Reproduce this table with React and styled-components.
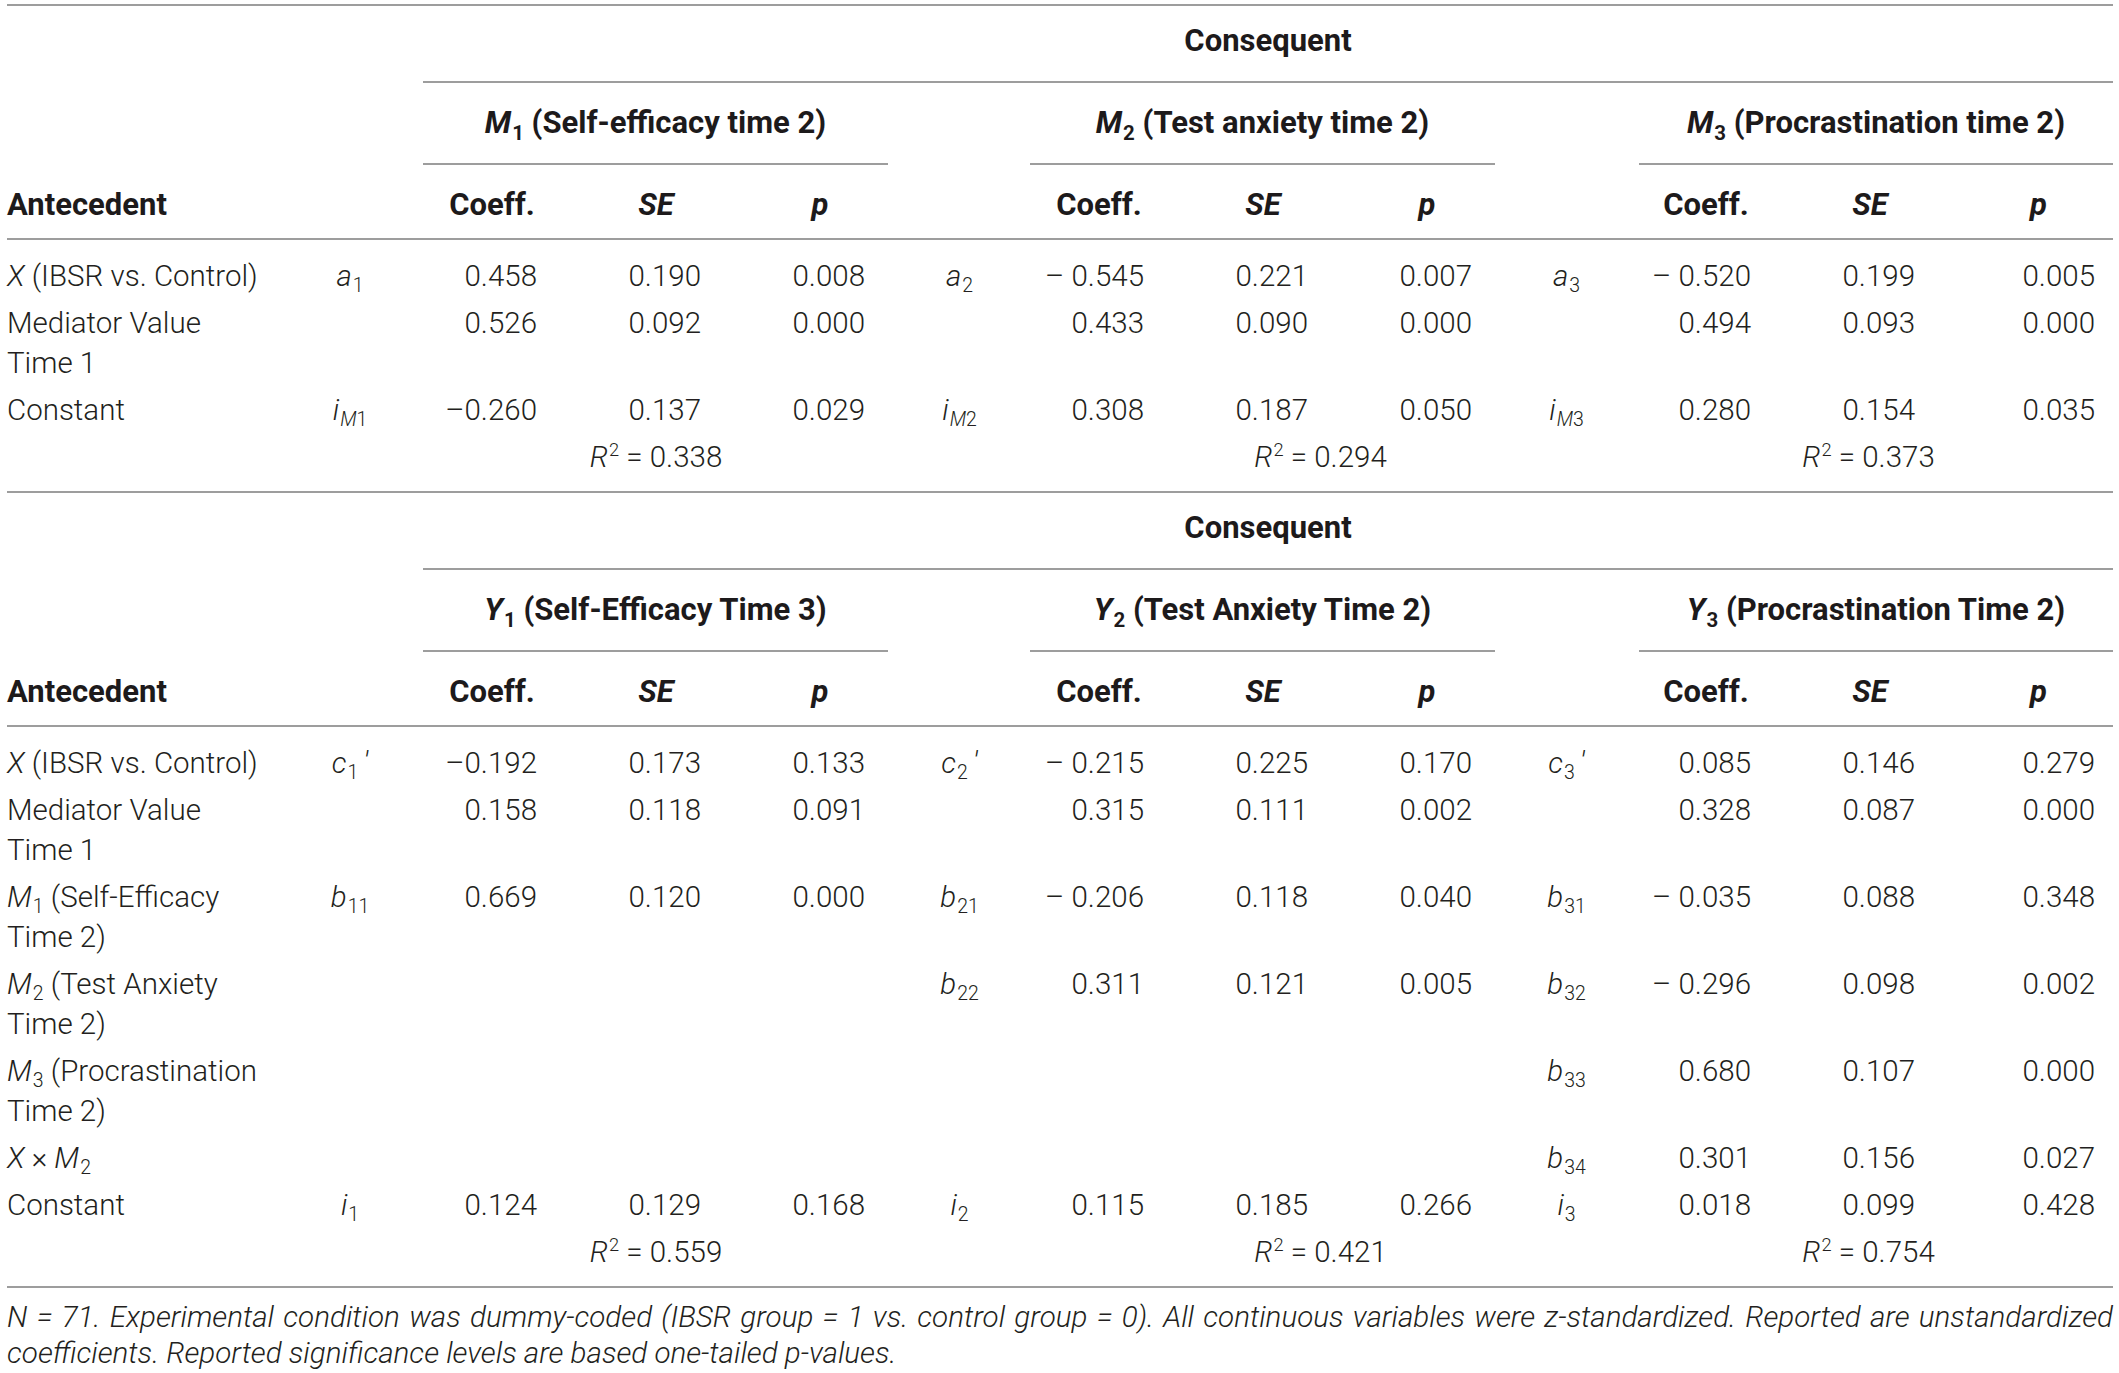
import React from "react";
import styled, { createGlobalStyle } from "styled-components";

const GlobalStyle = createGlobalStyle`
  html, body {
    margin: 0;
    padding: 0;
    background: #ffffff;
  }
  body {
    font-family: Roboto, "Liberation Sans", Arial, sans-serif;
    font-weight: 300;
    color: #231f20;
  }
`;

const COLS =
  "283px 120px 164px 164px 164px 115px 164px 164px 164px 115px 164px 164px 161px";
const RULE = "2px solid #9d9d9d";

const Page = styled.div`
  padding: 4px 6px 0 7px;
  width: 2106px;
`;

const Table = styled.div`
  border-top: ${RULE};
  border-bottom: ${RULE};
`;

const Block = styled.section`
  & + & {
    border-top: ${RULE};
  }
`;

const GridRow = styled.div`
  display: grid;
  grid-template-columns: ${COLS};
  font-size: 29.5px;
  line-height: 40px;
`;

const SpanHead = styled.div`
  grid-column: ${(p) => p.$col};
  margin-left: ${(p) => p.$ml ?? 13}px;
  margin-right: ${(p) => p.$mr ?? 0}px;
  padding: ${(p) => p.$pad};
  border-bottom: ${RULE};
  text-align: center;
  font-weight: 700;
  font-size: 31px;
  color: #1d1a1b;
  white-space: nowrap;
`;

const ColHeadRow = styled(GridRow)`
  padding: 20px 0 13px;
  border-bottom: ${RULE};
  font-weight: 700;
  font-size: 31px;
  color: #1d1a1b;
`;

const ColHead = styled.div`
  grid-column: ${(p) => p.$col};
  text-align: ${(p) => p.$align || "center"};
  padding-left: ${(p) => p.$pl || 0}px;
  font-style: ${(p) => (p.$italic ? "italic" : "normal")};
`;

const Body = styled.div`
  padding: 13px 0 10px;
`;

const BodyRow = styled(GridRow)`
  & > * {
    padding: 3px 0 4px;
  }
`;

const Antecedent = styled.div`
  grid-column: 1;
  text-align: left;
  white-space: nowrap;
`;

const PathLabel = styled.div`
  grid-column: ${(p) => p.$col};
  text-align: center;
  font-style: italic;
  white-space: nowrap;
`;

const Value = styled.div`
  grid-column: ${(p) => p.$col};
  text-align: right;
  padding-right: ${(p) => p.$pr ?? 37}px !important;
  white-space: nowrap;
`;

const RSquared = styled.div`
  grid-column: ${(p) => p.$col};
  text-align: center;
  white-space: nowrap;
`;

const I = styled.i`
  font-style: italic;
`;

const Up = styled.span`
  font-style: normal;
`;

const Sub = styled.sub`
  font-size: 0.66em;
  line-height: 0;
  vertical-align: baseline;
  position: relative;
  top: 0.32em;
  font-style: normal;
  margin-left: 1px;
`;

const Sup = styled.sup`
  font-size: 0.62em;
  line-height: 0;
  vertical-align: baseline;
  position: relative;
  top: -0.62em;
  margin-left: 1px;
`;

const Prime = styled.span`
  font-style: italic;
  margin-left: 5px;
  position: relative;
  top: -0.05em;
`;

const Note = styled.div`
  padding-top: 11px;
  font-size: 29.6px;
  line-height: 36px;
  font-style: italic;
  color: #231f20;
  width: 2106px;
`;

const NoteLine = styled.span`
  display: block;
  white-space: nowrap;
  text-align: ${(p) => (p.$justify ? "justify" : "left")};
  text-align-last: ${(p) => (p.$justify ? "justify" : "left")};
`;

/* starting grid line of each group's path-label column */
const GROUP_START = [2, 6, 10];

const Sym = ({ v, sub, prime }) => (
  <>
    {v}
    {sub != null && <Sub>{sub}</Sub>}
    {prime && <Prime>′</Prime>}
  </>
);

function HeaderRows({ titles, letter }) {
  return (
    <>
      <GridRow>
        <SpanHead $col="3 / -1" $pad="15px 0 20px">
          Consequent
        </SpanHead>
      </GridRow>
      <GridRow>
        {titles.map((t, i) => (
          <SpanHead
            key={i}
            $col={`${GROUP_START[i] + 1} / span 3`}
            $ml={i === 2 ? 15 : 13}
            $mr={i === 2 ? 0 : 14}
            $pad="20px 0 20px"
          >
            <I>{letter}</I>
            <Sub>{i + 1}</Sub>
            {t}
          </SpanHead>
        ))}
      </GridRow>
      <ColHeadRow>
        <ColHead $col={1} $align="left">
          Antecedent
        </ColHead>
        {GROUP_START.map((s, i) => (
          <React.Fragment key={i}>
            <ColHead $col={s + 1}>Coeff.</ColHead>
            <ColHead $col={s + 2} $italic>
              SE
            </ColHead>
            <ColHead $col={s + 3} $italic $pl={i === 2 ? 12 : 0}>
              p
            </ColHead>
          </React.Fragment>
        ))}
      </ColHeadRow>
    </>
  );
}

function DataRow({ label, cells }) {
  return (
    <BodyRow>
      <Antecedent>{label}</Antecedent>
      {cells.map((g, i) => {
        if (!g) return null;
        const s = GROUP_START[i];
        return (
          <React.Fragment key={i}>
            {g.sym && (
              <PathLabel $col={s}>
                <Sym {...g.sym} />
              </PathLabel>
            )}
            <Value $col={s + 1}>{g.v[0]}</Value>
            <Value $col={s + 2}>{g.v[1]}</Value>
            <Value $col={s + 3} $pr={i === 2 ? 18 : 37}>
              {g.v[2]}
            </Value>
          </React.Fragment>
        );
      })}
    </BodyRow>
  );
}

const R_COLS = ["3 / 6", "7 / 11", "11 / 14"];

function RRow({ values }) {
  return (
    <BodyRow>
      {values.map((v, i) => (
        <RSquared key={i} $col={R_COLS[i]}>
          <I>R</I>
          <Sup>2</Sup> = {v}
        </RSquared>
      ))}
    </BodyRow>
  );
}

const XLabel = (
  <>
    <I>X</I> (IBSR vs. Control)
  </>
);

const MedLabel = (
  <>
    Mediator Value
    <br />
    Time 1
  </>
);

const iM = (n) => (
  <>
    i
    <Sub>
      <I>M</I>
      <Up>{n}</Up>
    </Sub>
  </>
);

const block1 = [
  {
    label: XLabel,
    cells: [
      { sym: { v: "a", sub: "1" }, v: ["0.458", "0.190", "0.008"] },
      { sym: { v: "a", sub: "2" }, v: ["– 0.545", "0.221", "0.007"] },
      { sym: { v: "a", sub: "3" }, v: ["– 0.520", "0.199", "0.005"] },
    ],
  },
  {
    label: MedLabel,
    cells: [
      { v: ["0.526", "0.092", "0.000"] },
      { v: ["0.433", "0.090", "0.000"] },
      { v: ["0.494", "0.093", "0.000"] },
    ],
  },
  {
    label: "Constant",
    cells: [
      { sym: { v: iM(1) }, v: ["–0.260", "0.137", "0.029"] },
      { sym: { v: iM(2) }, v: ["0.308", "0.187", "0.050"] },
      { sym: { v: iM(3) }, v: ["0.280", "0.154", "0.035"] },
    ],
  },
];

const block2 = [
  {
    label: XLabel,
    cells: [
      { sym: { v: "c", sub: "1", prime: true }, v: ["–0.192", "0.173", "0.133"] },
      { sym: { v: "c", sub: "2", prime: true }, v: ["– 0.215", "0.225", "0.170"] },
      { sym: { v: "c", sub: "3", prime: true }, v: ["0.085", "0.146", "0.279"] },
    ],
  },
  {
    label: MedLabel,
    cells: [
      { v: ["0.158", "0.118", "0.091"] },
      { v: ["0.315", "0.111", "0.002"] },
      { v: ["0.328", "0.087", "0.000"] },
    ],
  },
  {
    label: (
      <>
        <I>M</I>
        <Sub>1</Sub> (Self-Efficacy
        <br />
        Time 2)
      </>
    ),
    cells: [
      { sym: { v: "b", sub: "11" }, v: ["0.669", "0.120", "0.000"] },
      { sym: { v: "b", sub: "21" }, v: ["– 0.206", "0.118", "0.040"] },
      { sym: { v: "b", sub: "31" }, v: ["– 0.035", "0.088", "0.348"] },
    ],
  },
  {
    label: (
      <>
        <I>M</I>
        <Sub>2</Sub> (Test Anxiety
        <br />
        Time 2)
      </>
    ),
    cells: [
      null,
      { sym: { v: "b", sub: "22" }, v: ["0.311", "0.121", "0.005"] },
      { sym: { v: "b", sub: "32" }, v: ["– 0.296", "0.098", "0.002"] },
    ],
  },
  {
    label: (
      <>
        <I>M</I>
        <Sub>3</Sub> (Procrastination
        <br />
        Time 2)
      </>
    ),
    cells: [null, null, { sym: { v: "b", sub: "33" }, v: ["0.680", "0.107", "0.000"] }],
  },
  {
    label: (
      <>
        <I>X</I> × <I>M</I>
        <Sub>2</Sub>
      </>
    ),
    cells: [null, null, { sym: { v: "b", sub: "34" }, v: ["0.301", "0.156", "0.027"] }],
  },
  {
    label: "Constant",
    cells: [
      { sym: { v: "i", sub: "1" }, v: ["0.124", "0.129", "0.168"] },
      { sym: { v: "i", sub: "2" }, v: ["0.115", "0.185", "0.266"] },
      { sym: { v: "i", sub: "3" }, v: ["0.018", "0.099", "0.428"] },
    ],
  },
];

export default function App() {
  return (
    <>
      <GlobalStyle />
      <Page>
        <Table>
          <Block>
            <HeaderRows
              letter="M"
              titles={[
                " (Self-efficacy time 2)",
                " (Test anxiety time 2)",
                " (Procrastination time 2)",
              ]}
            />
            <Body>
              {block1.map((r, i) => (
                <DataRow key={i} {...r} />
              ))}
              <RRow values={["0.338", "0.294", "0.373"]} />
            </Body>
          </Block>
          <Block>
            <HeaderRows
              letter="Y"
              titles={[
                " (Self-Efficacy Time 3)",
                " (Test Anxiety Time 2)",
                " (Procrastination Time 2)",
              ]}
            />
            <Body>
              {block2.map((r, i) => (
                <DataRow key={i} {...r} />
              ))}
              <RRow values={["0.559", "0.421", "0.754"]} />
            </Body>
          </Block>
        </Table>
        <Note>
          <NoteLine $justify>
            N = 71. Experimental condition was dummy-coded (IBSR group = 1 vs.
            control group = 0). All continuous variables were z-standardized.
            Reported are unstandardized
          </NoteLine>
          <NoteLine>
            coefficients. Reported significance levels are based one-tailed
            p-values.
          </NoteLine>
        </Note>
      </Page>
    </>
  );
}
